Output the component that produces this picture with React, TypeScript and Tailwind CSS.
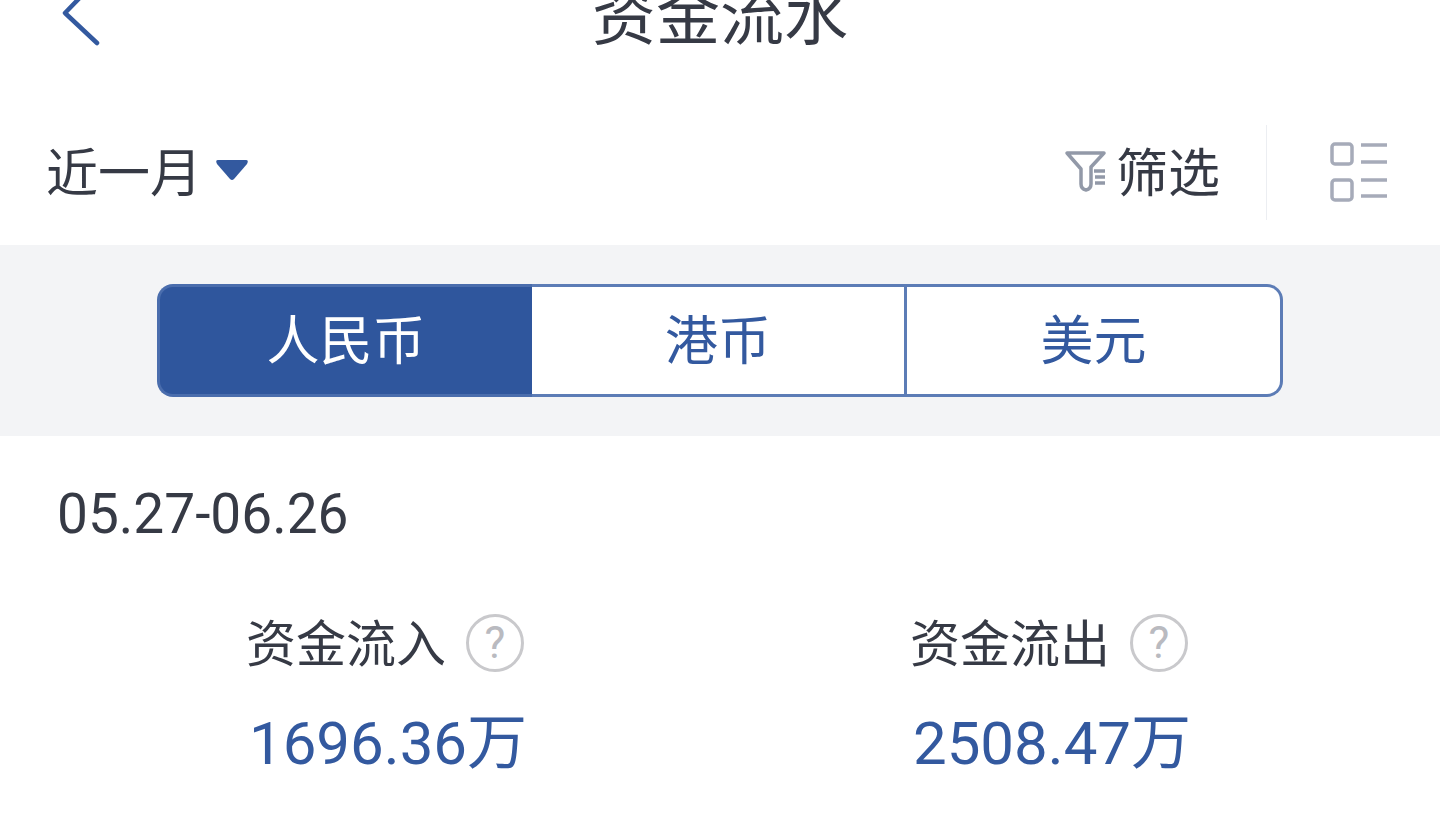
import React from "react";

const FONT = "font-['Roboto','Noto_Sans_CJK_SC',sans-serif]";

const FilterIcon = () => (
  <svg className="mb-[4px]" width="44" height="44" viewBox="0 0 44 44" fill="none" stroke="#9299a8" strokeWidth="3.5" strokeLinejoin="round" strokeLinecap="round">
    <path d="M3 4 H40 L27 18 V35 Q27 40 22 41 Q17 40 17 35 V20 Z" />
    <path d="M30 22 H41 M31 28 H41 M31 34 H41" strokeLinecap="butt" />
  </svg>
);

const ListIcon = () => (
  <svg className="mb-[2px]" width="58" height="60" viewBox="0 0 58 60" fill="none" stroke="#a6abb9" strokeWidth="3.5" strokeLinejoin="round">
    <rect x="2" y="2" width="20" height="20" rx="3" />
    <rect x="2" y="38" width="20" height="20" rx="3" />
    <path d="M31 3 H57 M31 20 H57 M31 38 H57 M31 54 H57" />
  </svg>
);

const HelpIcon = () => (
  <span className="flex h-[58px] w-[58px] items-center justify-center rounded-full border-[3px] border-[#c9c9cc] text-[44px] leading-none text-[#b9bac0]">
    ?
  </span>
);

function Stat({ label, value }: { label: string; value: string }) {
  return (
    <div className="flex flex-col items-center">
      <div className="flex items-center gap-[20px]">
        <span className="translate-y-[2px] text-[50px] leading-[58px] text-[#363a45]">{label}</span>
        <HelpIcon />
      </div>
      <div className="mt-[36px] pl-[6px] text-[60px] leading-[72px] text-[#33599f]">{value}</div>
    </div>
  );
}

export default function App() {
  return (
    <div className={`h-[823px] w-[1440px] overflow-hidden bg-white ${FONT}`}>
      <div className="-mt-[32px]">
        {/* header */}
        <div className="relative flex h-[100px] items-center justify-center">
          <svg className="absolute left-[60px] top-[10px]" width="40" height="70" viewBox="0 0 40 70" fill="none" stroke="#33599f" strokeWidth="4.5" strokeLinecap="round" strokeLinejoin="round">
            <path d="M37 2 L5 35 L37 65" />
          </svg>
          <span className="text-[64px] leading-none text-[#363a45]">资金流水</span>
        </div>

        {/* toolbar */}
        <div className="flex h-[177px] items-center pl-[46px] pr-[52px] pt-[32px]">
          <span className="mt-[5px] text-[52px] leading-none text-[#363a45]">近一月</span>
          <svg className="mb-[6px] ml-[13px]" width="34" height="24" viewBox="0 0 34 24">
            <path d="M3 2 H31 Q34 2 32 6 L19 21 Q17 23 15 21 L2 6 Q0 2 3 2 Z" fill="#33599f" />
          </svg>
          <div className="ml-auto flex items-center">
            <FilterIcon />
            <span className="ml-[8px] mt-[5px] text-[52px] leading-none text-[#363a45]">筛选</span>
            <div className="ml-[46px] mr-[63px] h-[95px] w-px bg-[#eceef2]" />
            <ListIcon />
          </div>
        </div>

        {/* currency tabs */}
        <div className="flex h-[191px] items-center justify-center bg-[#f3f4f6]">
          <div className="flex h-[113px] w-[1126px] text-[53px] text-[#33599f]">
            <div className="flex w-[375px] items-center justify-center rounded-l-[16px] border-[3px] border-r-0 border-[#4a6dad] bg-[#2f569d] pt-[5px] text-white">人民币</div>
            <div className="flex w-[375px] items-center justify-center border-y-[3px] border-r-[3px] border-[#5c7cb6] bg-white pt-[5px]">港币</div>
            <div className="flex flex-1 items-center justify-center rounded-r-[16px] border-y-[3px] border-r-[3px] border-[#5c7cb6] bg-white pt-[5px]">美元</div>
          </div>
        </div>

        {/* date range */}
        <div className="pl-[57px] pt-[47px] text-[55px] leading-[62px] text-[#363a45]">05.27-06.26</div>

        {/* stats */}
        <div className="mt-[69px] grid grid-cols-2 pl-[53px] pr-[59px]">
          <Stat label="资金流入" value="1696.36万" />
          <Stat label="资金流出" value="2508.47万" />
        </div>
      </div>
    </div>
  );
}
